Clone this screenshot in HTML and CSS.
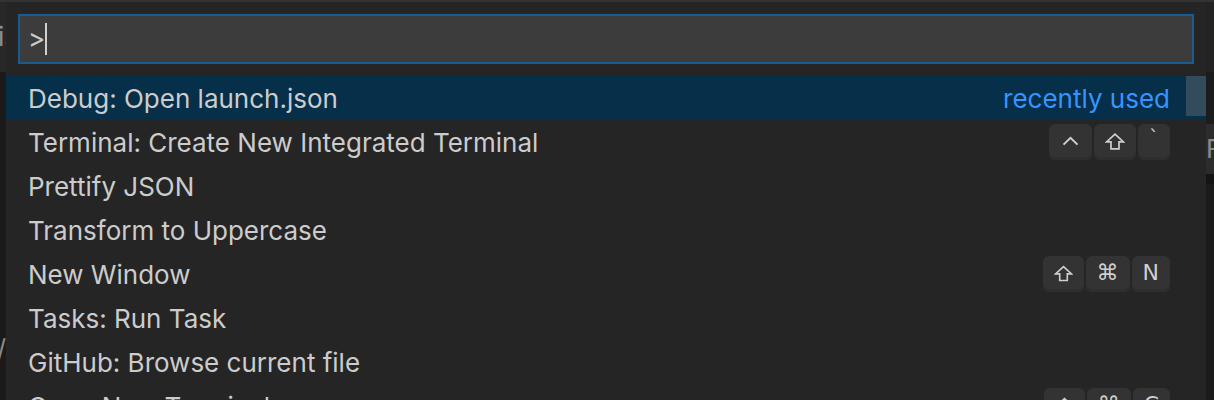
FILE: index.html
```html
<!DOCTYPE html>
<html>
<head>
<meta charset="utf-8">
<link rel="stylesheet" href="styles.css">
</head>
<body>
<div class="stage">
  <div class="side side-left">
    <div class="tabbar"><span class="frag frag-left">is</span></div>
    <div class="editor"><span class="frag slash">/</span></div>
  </div>

  <div class="widget">
    <div class="input-box">
      <span class="prompt">&gt;</span><span class="caret"></span>
    </div>

    <div class="list">
      <div class="scroll-thumb"></div>

      <div class="row selected">
        <span class="label">Debug: Open launch.json</span>
        <span class="desc">recently used</span>
      </div>
      <div class="row">
        <span class="label">Terminal: Create New Integrated Terminal</span>
        <span class="keys">
          <span class="key"><svg class="ico" width="21" height="10" viewBox="0 0 21 10"><polyline points="3.5,8.6 10.5,1.8 17.5,8.6" fill="none" stroke="#cfcfcf" stroke-width="2"/></svg></span>
          <span class="key"><svg class="ico" width="20" height="17" viewBox="0 0 20 17"><path d="M10 1.2 L18.4 8.9 H14 V15.8 H6 V8.9 H1.6 Z" fill="none" stroke="#cfcfcf" stroke-width="1.7"/></svg></span>
          <span class="key"><span class="kt tick">`</span></span>
        </span>
      </div>
      <div class="row"><span class="label">Prettify JSON</span></div>
      <div class="row"><span class="label">Transform to Uppercase</span></div>
      <div class="row">
        <span class="label">New Window</span>
        <span class="keys">
          <span class="key"><svg class="ico" width="19" height="17" viewBox="0 0 20 17"><path d="M10 1.2 L18.4 8.9 H14 V15.8 H6 V8.9 H1.6 Z" fill="none" stroke="#cfcfcf" stroke-width="1.7"/></svg></span>
          <span class="key"><span class="kt">⌘</span></span>
          <span class="key"><span class="kt">N</span></span>
        </span>
      </div>
      <div class="row"><span class="label">Tasks: Run Task</span></div>
      <div class="row"><span class="label">GitHub: Browse current file</span></div>
      <div class="row">
        <span class="label">Open New Terminal</span>
        <span class="keys">
          <span class="key"><svg class="ico" width="19" height="17" viewBox="0 0 20 17"><path d="M10 1.2 L18.4 8.9 H14 V15.8 H6 V8.9 H1.6 Z" fill="none" stroke="#cfcfcf" stroke-width="1.7"/></svg></span>
          <span class="key"><span class="kt">⌘</span></span>
          <span class="key"><span class="kt">C</span></span>
        </span>
      </div>
    </div>
  </div>

  <div class="side side-right">
    <div class="r-top"></div>
    <div class="r-mid"></div>
    <div class="r-tab"><span class="frag-r">F</span></div>
    <div class="r-shadow"></div>
    <div class="r-rest"></div>
  </div>
</div>
</body>
</html>
```

FILE: styles.css
```css
html, body {
  margin: 0;
  padding: 0;
  background: #1b1b1b;
  overflow: hidden;
}

body {
  font-family: Inter, "Noto Sans", "Liberation Sans", sans-serif;
  color: #cccccc;
}

.stage {
  display: flex;
  width: 1214px;
  height: 400px;
  border-top: 2px solid #333333;
  box-sizing: border-box;
  overflow: hidden;
}

/* background editor slivers */
.side {
  display: flex;
  flex-direction: column;
  overflow: hidden;
}

.side-left {
  width: 6px;
  flex: none;
}

.tabbar {
  height: 70px;
  flex: none;
  background: #282828;
  display: flex;
  justify-content: flex-start;
  align-items: center;
  overflow: hidden;
}

.frag-left {
  margin-left: -2px;
}

.editor {
  flex: 1;
  background: #1a1a1a;
  display: flex;
  justify-content: flex-end;
  align-items: flex-start;
  overflow: hidden;
}

.frag {
  white-space: nowrap;
  font-size: 26px;
  color: #8f8f8f;
  line-height: 26px;
}

.slash {
  margin-top: 264px;
  color: #8a8a8a;
}

.side-right {
  width: 8px;
  flex: none;
}

.r-top { height: 70px; background: #232323; flex: none; }
.r-mid { height: 52px; background: #1c1c1c; flex: none; }
.r-tab {
  height: 50px;
  background: #2c2c2c;
  flex: none;
  display: flex;
  align-items: center;
  overflow: hidden;
}
.frag-r {
  font-size: 26px;
  color: #8a8a8a;
  white-space: nowrap;
  line-height: 26px;
}
.r-shadow { height: 10px; background: #141414; flex: none; }
.r-rest { flex: 1; background: #1b1b1b; }

/* quick open widget */
.widget {
  width: 1200px;
  flex: none;
  background: #252526;
  padding-top: 12px;
  box-sizing: border-box;
}

.input-box {
  margin: 0 12px;
  height: 50px;
  box-sizing: border-box;
  background: #3c3c3c;
  border: 2px solid #195d90;
  display: flex;
  align-items: center;
  padding-left: 8px;
}

.prompt {
  font-size: 26px;
  color: #cccccc;
  line-height: 30px;
}

.caret {
  width: 2px;
  height: 32px;
  background: #d0d0d0;
  margin-left: 0;
}

.list {
  position: relative;
  margin-top: 12px;
}

.scroll-thumb {
  position: absolute;
  right: 0;
  top: 0;
  width: 20px;
  height: 40px;
  background: rgba(121, 121, 121, 0.4);
}

.row {
  height: 44px;
  display: flex;
  align-items: center;
  justify-content: space-between;
  padding: 0 36px 0 22px;
  font-size: 26px;
  white-space: nowrap;
}

.row.selected {
  background: #062f4a;
}

.label {
  color: #cccccc;
}

.desc {
  color: #3794ff;
}

.keys {
  display: flex;
  gap: 2px;
}

.key {
  height: 36px;
  box-sizing: border-box;
  min-width: 32px;
  padding: 0 11px;
  display: flex;
  align-items: center;
  justify-content: center;
  background: #333334;
  border-radius: 6px;
  box-shadow: inset 0 -3px 0 #2e2e2f;
}

.ico {
  display: block;
  margin-top: -2px;
}

.kt {
  font-family: "DejaVu Sans", sans-serif;
  font-size: 22px;
  color: #cfcfcf;
  line-height: 1;
  margin-top: -2px;
}

.tick {
  font-size: 20px;
  margin-top: -10px;
}
```
